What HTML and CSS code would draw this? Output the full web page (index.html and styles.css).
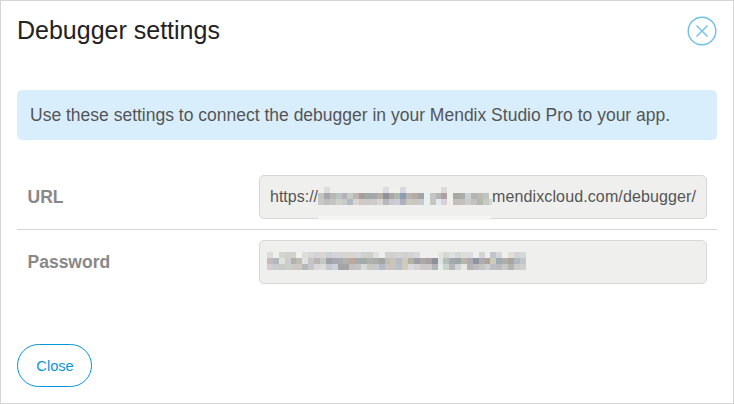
FILE: index.html
```html
<!DOCTYPE html>
<html lang="en">
<head>
<meta charset="utf-8">
<title>Debugger settings</title>
<link rel="stylesheet" href="styles.css">
</head>
<body>
<main class="dialog">
  <header class="header">
    <h1 class="title">Debugger settings</h1>
    <svg class="dismiss" viewBox="0 0 30 30" role="img" aria-label="Close">
      <circle cx="15" cy="15" r="13.8"/>
      <path d="M9.5 9.5l11 11M20.5 9.5l-11 11"/>
    </svg>
  </header>
  <p class="notice">Use these settings to connect the debugger in your Mendix Studio Pro to your app.</p>
  <section class="settings">
    <div class="row">
      <span class="label">URL</span>
      <div class="field">
        <span>https://</span><svg class="mosaic host" id="host"></svg><span class="domain">mendixcloud.com/debugger/</span>
        <i class="strip"></i>
      </div>
    </div>
    <div class="row">
      <span class="label">Password</span>
      <div class="field secret"><svg class="mosaic key" id="key"></svg></div>
    </div>
  </section>
  <button class="close">Close</button>
</main>
<script src="mosaic.js"></script>
</body>
</html>
```
FILE: styles.css
```css
* { box-sizing: border-box; }
body {
  margin: 0;
  background: #fff;
  font-family: "Liberation Sans", Arial, sans-serif;
  color: #555;
}
.dialog {
  height: 404px;
  padding: 15px 16px 16px;
  border: 1px solid #d5d5d5;
  display: flex;
  flex-direction: column;
  align-items: stretch;
}
.header {
  height: 30px;
  display: flex;
  justify-content: space-between;
  align-items: center;
}
.title {
  margin: 0 0 2px;
  font-size: 25px;
  line-height: 28px;
  font-weight: 400;
  color: #222;
  white-space: nowrap;
}
.dismiss {
  width: 30px;
  height: 30px;
  fill: none;
  stroke: #6dbfe8;
  stroke-width: 1.4;
}
.notice {
  margin: 44px 0 0;
  height: 50px;
  padding: 0 13px;
  border-radius: 5px;
  background: #d9eefd;
  font-size: 17.5px;
  line-height: 50px;
  white-space: nowrap;
}
.settings { margin-top: 25px; }
.row {
  display: flex;
  justify-content: space-between;
  align-items: center;
  padding: 10px 10px 10px 10.5px;
}
.row:first-child { border-bottom: 1px solid #d5d5d5; }
.label {
  font-size: 17.5px;
  font-weight: 700;
  color: #888;
}
.field {
  position: relative;
  width: 448px;
  height: 44px;
  padding-left: 10px;
  display: flex;
  align-items: center;
  border: 1px solid #d7d7d7;
  border-radius: 5px;
  background: #efefed;
  font-size: 16px;
  white-space: nowrap;
}
.secret { padding-left: 7px; }
.domain { letter-spacing: 0.12px; }
.mosaic {
  height: 18px;
  flex: none;
  margin-bottom: 2px;
}
.host { width: 174px; }
.key { width: 259px; }
.strip {
  position: absolute;
  left: 58px;
  bottom: -2px;
  width: 173px;
  height: 4px;
  background: #f5f5f4;
}
.close {
  width: 75px;
  height: 43px;
  margin-top: auto;
  padding: 0 0 0 1px;
  border: 1px solid #0595db;
  border-radius: 22px;
  background: #fff;
  color: #0595db;
  font: 14.6px "Liberation Sans", Arial, sans-serif;
}
```
FILE: mosaic.js
```js
// Rows of six-digit colours; "-" leaves a cell transparent.
const mosaics = {
  host: [
    "- dcdcde - - - - - - - - - dcdcde - f0f2e6 d8d8e4 - - - - - - dedadc - - - - - - - -",
    "c4c4c2 a8a8a8 b8b8b6 b8c6c2 b8b0b8 c0cec8 c0b4b0 a39f9f a0a8a8 a4a8ae b4b0a4 909098 a8a8a8 b0b8ac 8c9cb4 b8b4b0 b4aca0 a0a4a8 e8f0ee c4c4c2 b4b4b4 aca0a4 - a8a8a0 a8acac ccd0d0 b4b4b4 bcbcb0 c0c4c0 -",
    "c8c8c4 c0c0c0 c4c4c4 d0d0cc c8ccc8 b0bac4 dcd4d0 d0cac4 cccac8 cccccc dcd6d2 b8b8bc ccc8d0 ccccd4 acb0c0 ccc8c0 c8c8c0 c8c8d0 e8f0ee c8c4c0 e4e8f0 dcd0d8 - c4bebc c4c0bc c8cccc c8c0c0 b4baac c8c8c4 d0d8dc"
  ],
  key: [
    "dcdcdc - d4d4cc d0d0cc d0d0cc - deded8 d8d8dc d4d4d8 d8d8d0 ccd0d4 d4d4d8 d4d4d8 d8d4d0 d8d4d0 d8d8dc d0d0d0 d0d0c8 dce2e2 eeeeec d0d0d0 d0d0d0 d4d4d4 d0d0d0 d4d4d8 d8d8dc - - - e6e2dc d4d8d0 dce2e4 d4d8d4 e0ded8 dadce2 - d4d4d8 f0eeea c0c4cc d4d6d8 - e4ded8 d2d4d4 d4d8d8",
    "c4bcbc b0b8c0 e0e0dc cccccc b4b0b0 c0bcb4 e0e0e0 c4c4c4 bcb4b4 c4c8c4 a0a0a8 a8a8b0 a8acac b0b0b0 c0a898 a4acb0 a4aca8 b0b0ae acaca8 a0a4a4 c0bcb4 c8c6b8 b8bcc4 ccccbc b4b0a4 98a0a4 aca8a8 a8a0a4 8c9098 dce4e4 b4c0b8 a4a8ac 9ca8a4 bcb4a8 acacb4 9094a0 acacb0 b0a298 ccccbc 9cacb4 b0aea6 a8a49e b0b8c4 c4c8c4",
    "d4ccd4 c4cccc cacac4 c8d0cc d0c8c4 ccc8c4 b8b8b8 c4c8cc dcd6d6 dcdcd8 c4c8d0 d0d0d8 a4a4a8 a4a4a8 c4c0be c4c4c8 d4dad8 c8c8c0 c8c8cc b4bac4 ccc4be ccc4bc b8c0cc d0ccbc d8dcdc d4d4d8 ccc8c8 ccc8cc b4b4b8 e4ecec ccd4cc b4b8bc ccd6d4 ece6e0 b4b4b8 bcbcbc c4c4c4 d0d0d0 bcc0c4 bcbcc0 c8c8c8 b4b4b0 cccccc ced0ce"
  ]
};
const CELL = 5.88;
for (const [id, rows] of Object.entries(mosaics)) {
  const svg = document.getElementById(id);
  svg.setAttribute("shape-rendering", "crispEdges");
  rows.forEach((row, y) => row.split(" ").forEach((color, x) => {
    if (color === "-") return;
    const rect = document.createElementNS("http://www.w3.org/2000/svg", "rect");
    rect.setAttribute("x", x * CELL);
    rect.setAttribute("y", y * 6);
    rect.setAttribute("width", CELL);
    rect.setAttribute("height", 6);
    rect.setAttribute("fill", "#" + color);
    svg.appendChild(rect);
  }));
}
```
